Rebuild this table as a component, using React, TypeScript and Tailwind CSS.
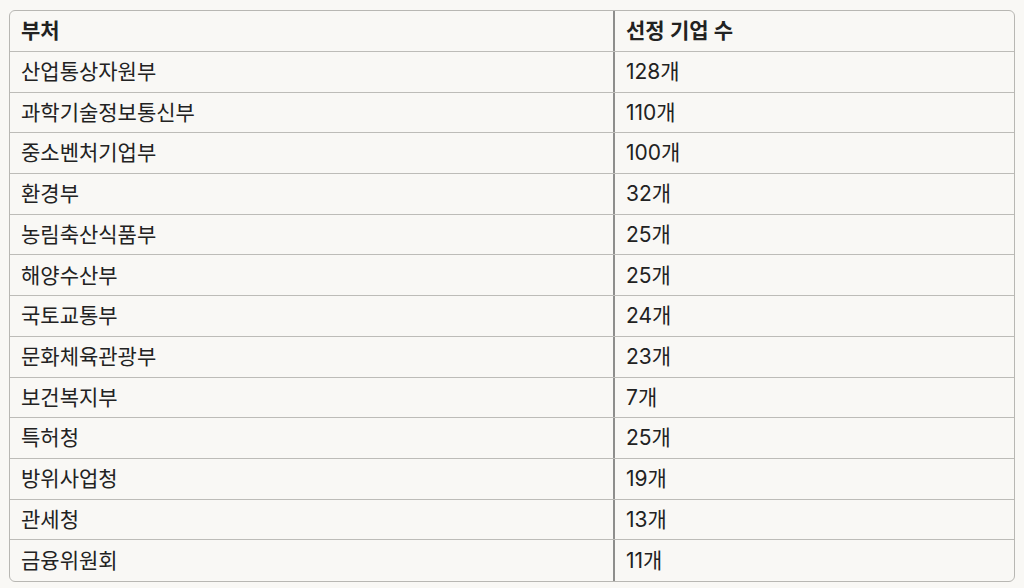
import React from 'react';

const rows: [string, string][] = [
  ['산업통상자원부', '128개'],
  ['과학기술정보통신부', '110개'],
  ['중소벤처기업부', '100개'],
  ['환경부', '32개'],
  ['농림축산식품부', '25개'],
  ['해양수산부', '25개'],
  ['국토교통부', '24개'],
  ['문화체육관광부', '23개'],
  ['보건복지부', '7개'],
  ['특허청', '25개'],
  ['방위사업청', '19개'],
  ['관세청', '13개'],
  ['금융위원회', '11개'],
];

export default function App() {
  return (
    <div className="w-[1024px] h-[588px] bg-[#f9f8f5] pt-[10px] px-[9px] font-['Inter','Noto_Sans_CJK_KR',sans-serif] text-[#222]">
      <div className="border border-[#b8b7b3] rounded-[6px] overflow-hidden">
        <div className="flex h-[41px] items-center border-b border-[#bdbcb8] text-[21px] font-semibold">
          <div className="w-[605px] pl-[11px] border-r-2 border-[#8e8e8c] h-full flex items-center">부처</div>
          <div className="flex-1 pl-[11px]">선정 기업 수</div>
        </div>
        {rows.map(([name, count], i) => (
          <div
            key={name}
            className={`flex h-[40.7px] items-center text-[21px] ${i < rows.length - 1 ? 'border-b border-[#bdbcb8]' : ''}`}
          >
            <div className="w-[605px] pl-[11px] border-r-2 border-[#8e8e8c] h-full flex items-center">{name}</div>
            <div className="flex-1 pl-[11px]">{count}</div>
          </div>
        ))}
      </div>
    </div>
  );
}
